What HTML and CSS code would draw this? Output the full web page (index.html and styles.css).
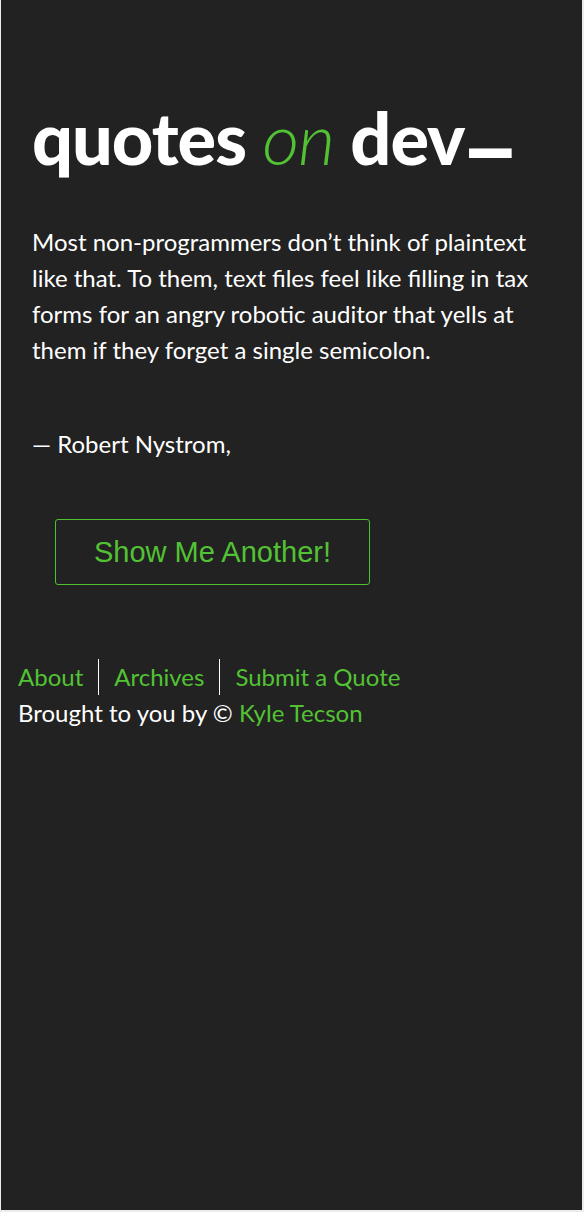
FILE: index.html
```html
<!DOCTYPE html>
<html lang="en">
<head>
<meta charset="utf-8">
<title>quotes on dev</title>
<link rel="stylesheet" href="styles.css">
</head>
<body>
<div class="page">
  <main class="main">
    <h1 class="title">quotes <span class="on">on</span> dev<span class="cursor">_</span></h1>
    <p class="quote">Most non-programmers don’t think of plaintext like that. To them, text files feel like filling in tax forms for an angry robotic auditor that yells at them if they forget a single semicolon.</p>
    <p class="author">— Robert Nystrom,</p>
    <button class="another" type="button">Show Me Another!</button>
  </main>
  <footer class="footer">
    <nav class="nav">
      <a href="#" class="nav-link">About</a>
      <a href="#" class="nav-link">Archives</a>
      <a href="#" class="nav-link">Submit a Quote</a>
    </nav>
    <p class="credit">Brought to you by © <a href="#" class="credit-link">Kyle Tecson</a></p>
  </footer>
</div>
</body>
</html>
```
FILE: styles.css
```css
html {
  background: #ececec;
}
body {
  margin: 0 2px 2px 1px;
  font-family: Lato, "Open Sans", sans-serif;
  color: #fff;
}
.page {
  background: #222;
  height: 1210px;
  box-sizing: border-box;
  padding-top: 92px;
}
.main {
  padding: 0 30px 0 31px;
}
.title {
  margin: 0;
  font-size: 72px;
  line-height: 90px;
  font-weight: 900;
  letter-spacing: -1px;
}
.on {
  color: #52c234;
  font-weight: 300;
  font-style: italic;
}
.cursor {
  display: inline-block;
  transform: translate(1px, -24px) scale(1.5, 1.5);
  transform-origin: left 78%;
}
.quote {
  margin: 42px 0 0;
  font-size: 24px;
  line-height: 36px;
}
.author {
  margin: 58px 0 0;
  font-size: 24px;
  line-height: 36px;
}
.another {
  margin: 57px 0 0 23px;
  width: 315px;
  height: 66px;
  background: transparent;
  border: 1px solid #4fc22f;
  border-radius: 3px;
  color: #52c234;
  font-family: "Liberation Sans", Arial, sans-serif;
  font-size: 29px;
}
.footer {
  margin-top: 74px;
  padding-left: 17px;
}
.nav {
  display: flex;
  align-items: center;
  font-size: 24px;
  line-height: 36px;
}
.nav-link {
  color: #52c234;
  text-decoration: none;
  padding: 0 15px;
  border-left: 1px solid #fff;
}
.nav-link:first-child {
  padding-left: 0;
  border-left: 0;
}
.credit {
  margin: 0;
  font-size: 24px;
  line-height: 36px;
}
.credit-link {
  color: #52c234;
  text-decoration: none;
}
```
